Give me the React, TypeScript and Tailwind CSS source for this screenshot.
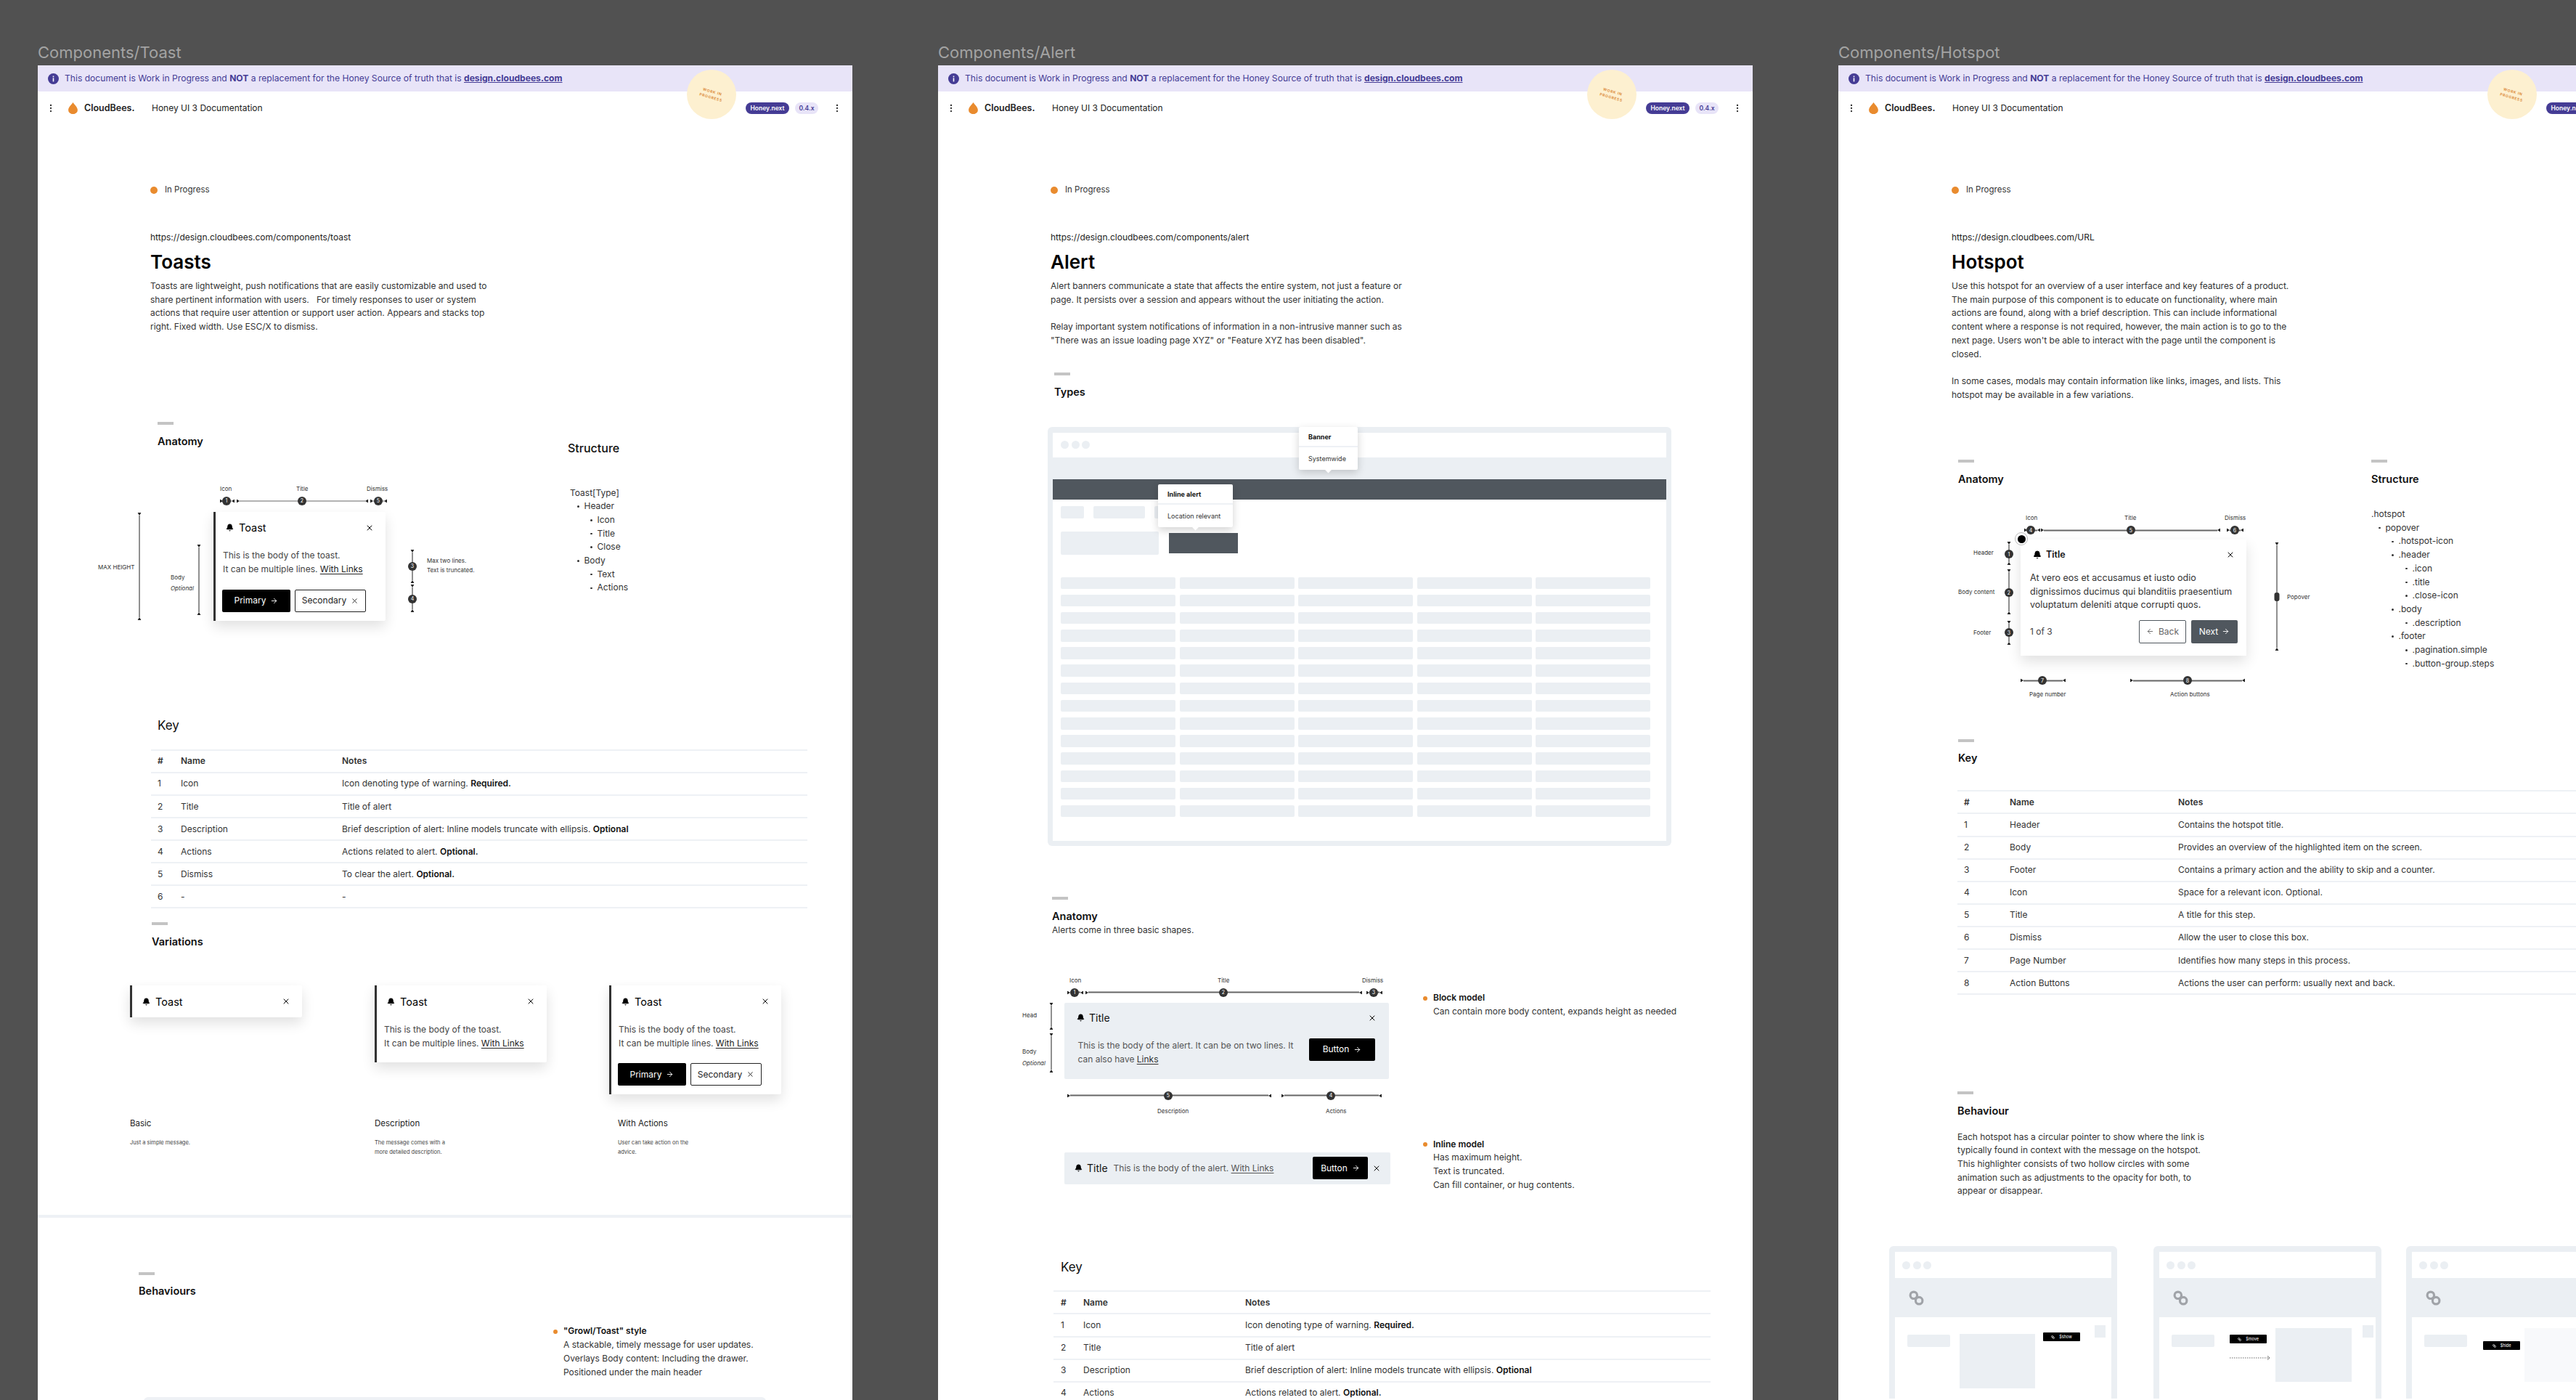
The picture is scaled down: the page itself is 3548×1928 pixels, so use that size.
import React from 'react';
import { Bell, X, ArrowRight, ArrowLeft, EllipsisVertical } from 'lucide-react';

const Tip = ({ dir }: { dir: 'r' | 'l' | 'd' | 'u' }) => {
    const paths = { r: 'M0 0L4 2.5L0 5Z', l: 'M4 0L0 2.5L4 5Z', d: 'M0 0L5 0L2.5 4Z', u: 'M0 4L5 4L2.5 0Z' };
    const wide = dir === 'd' || dir === 'u';
    return (
        <svg width={wide ? 5 : 4} height={wide ? 4 : 5} viewBox={wide ? '0 0 5 4' : '0 0 4 5'} className="shrink-0">
            <path d={paths[dir]} fill="#222" />
        </svg>
    );
};

const HRule = ({ className }: { className: string }) => (
    <div className={`absolute flex items-center -translate-y-1/2 ${className}`}>
        <Tip dir="r" />
        <div className="flex-1 h-[1.5px] bg-[#666]" />
        <Tip dir="l" />
    </div>
);

const VRule = ({ className }: { className: string }) => (
    <div className={`absolute flex flex-col items-center -translate-x-1/2 ${className}`}>
        <Tip dir="d" />
        <div className="flex-1 w-px bg-[#222]" />
        <Tip dir="u" />
    </div>
);

const Node = ({ n, className }: { n?: number; className: string }) => (
    <div className={`absolute flex items-center justify-center w-[12px] h-[12px] rounded-full bg-[#333] text-white text-[7px] leading-none -translate-x-1/2 -translate-y-1/2 ${className}`}>
        {n}
    </div>
);

const Note = ({ children, className }: { children: React.ReactNode; className: string }) => (
    <span className={`absolute text-[8px] leading-[10px] text-[#333] whitespace-nowrap -translate-y-1/2 ${className}`}>
        {children}
    </span>
);

const Dash = () => <div className="w-[22px] h-[4px] bg-[#c4c4c4]" />;

const BellIcon = ({ size = 11 }: { size?: number }) => <Bell size={size} className="fill-current text-black shrink-0" strokeWidth={2} />;

const HeadTitle = ({ children, className }: { children: React.ReactNode; className: string }) => (
    <h2 className={`text-[14.5px] leading-[20px] font-semibold text-[#111] ${className}`}>{children}</h2>
);

const Banner = () => (
    <div className="flex items-center h-[36px] bg-[#e8e4f8] text-[#453c95] text-[12.1px] pl-[14px]">
        <svg width="15" height="15" viewBox="0 0 15 15" className="shrink-0">
            <circle cx="7.5" cy="7.5" r="7.5" fill="#453c95" />
            <rect x="6.7" y="6.4" width="1.6" height="5" fill="#fff" />
            <rect x="6.7" y="3.6" width="1.6" height="1.7" fill="#fff" />
        </svg>
        <span className="ml-[8px] whitespace-nowrap">
            This document is Work in Progress and <b className="font-bold">NOT</b> a replacement for the Honey Source of truth that is{' '}
            <b className="font-bold underline">design.cloudbees.com</b>
        </span>
    </div>
);

const Nav = () => (
    <div className="flex items-center h-[46px] pl-[11px] pr-[14px] text-[12px] text-[#222]">
        <EllipsisVertical size={14} className="text-[#333] shrink-0" />
        <svg width="15" height="16" viewBox="0 0 14 15" className="ml-[16px] shrink-0">
            <path d="M7 0C9 3 13 6 13 10A6 5.2 0 0 1 1 10C1 6 5 3 7 0Z" fill="#e98b2e" />
        </svg>
        <span className="ml-[8px] w-[93px] text-[12.5px] font-semibold text-[#222]">CloudBees.</span>
        <span>Honey UI 3 Documentation</span>
        <div className="ml-auto flex items-center gap-[8px] text-[8.5px] font-semibold">
            <span className="px-[5px] h-[16px] w-[60px] flex items-center justify-center rounded-full bg-[#453c95] text-white whitespace-nowrap">Honey.next</span>
            <span className="h-[16px] w-[32px] flex items-center justify-center rounded-full bg-[#e8e4f8] text-[#453c95]">0.4.x</span>
        </div>
        <EllipsisVertical size={14} className="ml-[19px] text-[#333] shrink-0" />
    </div>
);

const WorkBadge = () => (
    <div className="absolute left-[894px] top-[6px] z-10 flex items-center justify-center w-[68px] h-[68px] rounded-full bg-[#fdf0d0]">
        <span className="rotate-[16deg] text-center text-[5px] leading-[8px] tracking-[0.14em] font-semibold text-[#d9822b]">
            WORK IN
            <br />
            PROGRESS
        </span>
    </div>
);

const Intro = ({ url, title, children }: { url: string; title: string; children: React.ReactNode }) => (
    <div className="pl-[155px]">
        <div className="mt-[82px] flex items-center h-[16px] text-[11.5px] text-[#333]">
            <span className="w-[10px] h-[10px] rounded-full bg-[#e98b2e]" />
            <span className="ml-[10px]">In Progress</span>
        </div>
        <div className="mt-[49px] h-[16px] text-[12px] leading-[16px] text-[#222]">{url}</div>
        <h1 className="mt-[9px] h-[34px] text-[26px] leading-[34px] font-semibold text-black">{title}</h1>
        <div className="mt-[7px] w-[484px] text-[12px] leading-[18.7px] text-[#333]">{children}</div>
    </div>
);

const Row = ({ cells, head, name, hash }: { cells: React.ReactNode[]; head?: boolean; name: string; hash: string }) => (
    <div className={`flex items-center h-[31.1px] border-b-2 border-[#eef1f5] text-[12px] text-[#333] ${head ? 'font-semibold text-[#111]' : ''}`}>
        <span className={hash}>{cells[0]}</span>
        <span className={name}>{cells[1]}</span>
        <span>{cells[2]}</span>
    </div>
);

const Table = ({ rows, name, hash }: { rows: React.ReactNode[][]; name: string; hash: string }) => (
    <div className="border-t-2 border-[#eef1f5]">
        <Row cells={['#', 'Name', 'Notes']} head name={name} hash={hash} />
        {rows.map((cells, i) => (
            <Row key={i} cells={cells} name={name} hash={hash} />
        ))}
    </div>
);

const ToastCard = ({ body, actions, className }: { body?: boolean; actions?: boolean; className?: string }) => (
    <div className={`w-[237px] bg-white border-l-[3px] border-[#333] rounded-r-[2px] shadow-[0_8px_18px_rgba(0,0,0,0.12)] ${className ?? ''}`}>
        <div className="flex items-center h-[44px] pl-[14px]">
            <BellIcon />
            <span className="ml-[7px] text-[14.5px] text-black">Toast</span>
            <X size={12} className="ml-auto mr-[16px] text-black" />
        </div>
        {body && (
            <div className={`pl-[10px] pt-[6.5px] text-[12px] leading-[19px] text-[#444] ${actions ? '' : 'pb-[17.5px]'}`}>
                <p>This is the body of the toast.</p>
                <p>
                    It can be multiple lines. <span className="text-[#222] underline underline-offset-2">With Links</span>
                </p>
            </div>
        )}
        {actions && (
            <div className="flex gap-[6px] pl-[9px] mt-[18.5px] pb-[12px]">
                <button className="flex items-center justify-center gap-[6px] w-[94px] h-[31px] rounded-[2px] bg-black text-white text-[12px]">
                    Primary <ArrowRight size={11} />
                </button>
                <button className="flex items-center justify-center gap-[6px] w-[98px] h-[31px] rounded-[2px] border border-[#222] bg-white text-[#222] text-[12px]">
                    Secondary <X size={11} />
                </button>
            </div>
        )}
    </div>
);

const Tree = ({ items, className }: { items: [string, number][]; className?: string }) => {
    const indent = ['', 'pl-[10px]', 'pl-[28px]', 'pl-[47px]'];
    return (
        <div className={`text-[12px] leading-[18.7px] text-[#333] ${className ?? ''}`}>
            {items.map(([text, level], i) => (
                <div key={i} className={`flex items-center ${indent[level]}`}>
                    {level > 0 && <span className="w-[2.5px] h-[2.5px] rounded-full bg-[#333] mr-[7px]" />}
                    {text}
                </div>
            ))}
        </div>
    );
};

const Bullet = ({ title, lines, className }: { title: string; lines: string[]; className?: string }) => (
    <div className={`flex text-[12px] leading-[18.7px] text-[#333] ${className ?? ''}`}>
        <span className="w-[6px] h-[6px] mt-[6.5px] mr-[8px] rounded-full bg-[#e98b2e] shrink-0" />
        <div>
            <div className="font-semibold text-[#111]">{title}</div>
            {lines.map((l) => (
                <div key={l}>{l}</div>
            ))}
        </div>
    </div>
);

const Frame = ({ label, children }: { label: string; children: React.ReactNode }) => (
    <div className="shrink-0 w-[1122px]">
        <div className="flex items-end h-[90px] pb-[4px] text-[22px] leading-[28px] text-[#a3a3a3]">{label}</div>
        <div className="relative h-[1838px] bg-white overflow-hidden">
            <Banner />
            <Nav />
            <WorkBadge />
            {children}
        </div>
    </div>
);

const ToastFrame = () => (
    <Frame label="Components/Toast">
        <Intro url="https://design.cloudbees.com/components/toast" title="Toasts">
            Toasts are lightweight, push notifications that are easily customizable and used to share pertinent information with users.&nbsp;&nbsp; For timely responses to user or system actions that require user attention or support user action. Appears and stacks top right. Fixed width. Use ESC/X to dismiss.
        </Intro>

        <div className="flex mt-[121px]">
            <div className="w-[730px]">
                <div className="pl-[165px]">
                    <Dash />
                    <HeadTitle className="mt-[13px]">Anatomy</HeadTitle>
                </div>
                <div className="relative mt-[42px] h-[300px]">
                    <Note className="left-[251px] top-[13px]">Icon</Note>
                    <Note className="left-[356px] top-[13px]">Title</Note>
                    <Note className="left-[453px] top-[13px]">Dismiss</Note>
                    <HRule className="left-[251px] top-[30px] w-[20px]" />
                    <HRule className="left-[274px] top-[30px] w-[181px]" />
                    <HRule className="left-[458px] top-[30px] w-[23px]" />
                    <Node n={1} className="left-[260px] top-[30px]" />
                    <Node n={2} className="left-[364px] top-[30px]" />
                    <Node n={5} className="left-[469px] top-[30px]" />
                    <VRule className="left-[140px] top-[46px] h-[148px]" />
                    <Note className="left-[83px] top-[121px]">MAX HEIGHT</Note>
                    <VRule className="left-[222px] top-[90px] h-[97px]" />
                    <Note className="left-[183px] top-[135px]">Body</Note>
                    <Note className="left-[183px] top-[150px] italic">Optional</Note>
                    <ToastCard body actions className="absolute left-[242px] top-[45px]" />
                    <VRule className="left-[516px] top-[97px] h-[46px]" />
                    <Node n={3} className="left-[516px] top-[120px]" />
                    <VRule className="left-[516px] top-[145px] h-[38px]" />
                    <Node n={4} className="left-[516px] top-[165px]" />
                    <Note className="left-[536px] top-[112px] text-[7.5px]">Max two lines.</Note>
                    <Note className="left-[536px] top-[125px] text-[7.5px]">Text is truncated.</Note>
                </div>
            </div>
            <div>
                <h2 className="mt-[26px] text-[16px] leading-[20px] font-medium text-[#111]">Structure</h2>
                <Tree
                    className="mt-[42.7px] pl-[3px]"
                    items={[['Toast[Type]', 0], ['Header', 1], ['Icon', 2], ['Title', 2], ['Close', 2], ['Body', 1], ['Text', 2], ['Actions', 2]]}
                />
            </div>
        </div>

        <div className="mt-[27px] pl-[165px] text-[17px] leading-[24px] text-[#111]">Key</div>
        <div className="mt-[21px] ml-[156px] w-[904px]">
            <Table
                hash="w-[41px] pl-[9px]"
                name="w-[222px]"
                rows={[
                    ['1', 'Icon', <>Icon denoting type of warning. <b className="font-semibold text-[#111]">Required.</b></>],
                    ['2', 'Title', 'Title of alert'],
                    ['3', 'Description', <>Brief description of alert: Inline models truncate with ellipsis. <b className="font-semibold text-[#111]">Optional</b></>],
                    ['4', 'Actions', <>Actions related to alert. <b className="font-semibold text-[#111]">Optional.</b></>],
                    ['5', 'Dismiss', <>To clear the alert. <b className="font-semibold text-[#111]">Optional.</b></>],
                    ['6', '-', '-'],
                ]}
            />
        </div>

        <div className="mt-[19px] pl-[157px]">
            <Dash />
            <HeadTitle className="mt-[13px]">Variations</HeadTitle>
        </div>

        <div className="flex mt-[50px] h-[316px] pl-[127px]">
            <div className="w-[337px]">
                <div className="h-[182px]"><ToastCard /></div>
                <div className="text-[11.5px] leading-[16px] text-[#222]">Basic</div>
                <div className="mt-[12px] text-[7.5px] leading-[13px] text-[#444]">Just a simple message.</div>
            </div>
            <div className="w-[323px]">
                <div className="h-[182px]"><ToastCard body /></div>
                <div className="text-[11.5px] leading-[16px] text-[#222]">Description</div>
                <div className="mt-[12px] text-[7.5px] leading-[13px] text-[#444]">The message comes with a<br />more detailed description.</div>
            </div>
            <div>
                <div className="h-[182px]"><ToastCard body actions /></div>
                <div className="pl-[12px]">
                    <div className="text-[11.5px] leading-[16px] text-[#222]">With Actions</div>
                    <div className="mt-[12px] text-[7.5px] leading-[13px] text-[#444]">User can take action on the<br />advice.</div>
                </div>
            </div>
        </div>

        <div className="h-[4px] bg-[#eef1f5]" />

        <div className="mt-[75px] pl-[139px]">
            <Dash />
            <HeadTitle className="mt-[12px]">Behaviours</HeadTitle>
        </div>
        <Bullet
            className="mt-[36px] ml-[710px]"
            title={'"Growl/Toast" style'}
            lines={['A stackable, timely message for user updates.', 'Overlays Body content: Including the drawer.', 'Positioned under the main header']}
        />
        <div className="mt-[25px] ml-[146px] w-[857px] h-[100px] rounded-t-[6px] bg-[#eef1f5]" />
    </Frame>
);

const Tooltip = ({ title, text, className, arrow }: { title: string; text: string; className: string; arrow: string }) => (
    <div className={`absolute bg-white rounded-[2px] shadow-[0_4px_12px_rgba(0,0,0,0.18)] text-[9px] text-[#333] ${className}`}>
        <div className="flex items-center h-[28px] pt-[2px] pl-[13px] font-bold text-[#111] border-b-2 border-[#eef1f5]">{title}</div>
        <div className="flex items-center h-[31px] pt-[1px] pl-[13px]">{text}</div>
        <span className={`absolute bottom-[-3px] w-[7px] h-[7px] bg-white rotate-45 ${arrow}`} />
    </div>
);

const Dots = () => (
    <div className="flex gap-[3.5px]">
        <span className="w-[11px] h-[11px] rounded-full bg-[#ebeff3]" />
        <span className="w-[11px] h-[11px] rounded-full bg-[#ebeff3]" />
        <span className="w-[11px] h-[11px] rounded-full bg-[#ebeff3]" />
    </div>
);

const AlertFrame = () => (
    <Frame label="Components/Alert">
        <Intro url="https://design.cloudbees.com/components/alert" title="Alert">
            Alert banners communicate a state that affects the entire system, not just a feature or page. It persists over a session and appears without the user initiating the action.
            <br />
            <br />
            Relay important system notifications of information in a non-intrusive manner such as "There was an issue loading page XYZ" or "Feature XYZ has been disabled".
        </Intro>

        <div className="mt-[34px] pl-[160px]">
            <Dash />
            <HeadTitle className="mt-[13px]">Types</HeadTitle>
        </div>

        <div className="relative mt-[38px] ml-[151px] w-[859px] h-[577px] rounded-[6px] bg-[#ebeff3] p-[7px] pt-[8px] flex flex-col">
            <div className="flex items-center h-[34px] pl-[11px] bg-white"><Dots /></div>
            <div className="h-[30px]" />
            <div className="h-[28px] bg-[#50575e]" />
            <div className="flex-1 bg-white pl-[11px]">
                <div className="flex gap-[13px] pt-[9.5px]">
                    <div className="w-[32px] h-[16.5px] rounded-[2px] bg-[#ebeff3]" />
                    <div className="w-[71px] h-[16.5px] rounded-[2px] bg-[#ebeff3]" />
                    <div className="w-[30px] h-[16.5px] rounded-[2px] bg-[#ebeff3]" />
                </div>
                <div className="flex items-center gap-[14px] mt-[18.5px]">
                    <div className="w-[135px] h-[32px] rounded-[2px] bg-[#ebeff3]" />
                    <div className="w-[95px] h-[28px] bg-[#50575e]" />
                </div>
                <div className="grid grid-cols-5 gap-x-[5.5px] gap-y-[7.7px] w-[812px] mt-[30.5px]">
                    {Array.from({ length: 70 }).map((_, i) => (
                        <div key={i} className="h-[16.5px] rounded-[2px] bg-[#ebeff3]" />
                    ))}
                </div>
            </div>
            <Tooltip title="Banner" text="Systemwide" className="left-[346px] top-0 w-[81px]" arrow="left-[37px]" />
            <Tooltip title="Inline alert" text="Location relevant" className="left-[152px] top-[79px] w-[103px]" arrow="left-[48px]" />
        </div>

        <div className="mt-[70px] pl-[157px]">
            <Dash />
            <HeadTitle className="mt-[13px]">Anatomy</HeadTitle>
            <div className="mt-[2px] text-[12px] leading-[14px] text-[#333]">Alerts come in three basic shapes.</div>
        </div>

        <div className="flex mt-[51px]">
            <div className="relative w-[668px] h-[300px] shrink-0">
                <Note className="left-[181px] top-[11px]">Icon</Note>
                <Note className="left-[385px] top-[11px]">Title</Note>
                <Note className="left-[584px] top-[11px]">Dismiss</Note>
                <HRule className="left-[178px] top-[28px] w-[22px]" />
                <HRule className="left-[203px] top-[28px] w-[381px]" />
                <HRule className="left-[590px] top-[28px] w-[22px]" />
                <Node n={1} className="left-[188px] top-[28px]" />
                <Node n={2} className="left-[393px] top-[28px]" />
                <Node n={3} className="left-[600px] top-[28px]" />
                <Note className="left-[116px] top-[59px]">Head</Note>
                <Note className="left-[116px] top-[109px]">Body</Note>
                <Note className="left-[116px] top-[125px] italic">Optional</Note>
                <VRule className="left-[156px] top-[42px] h-[37px]" />
                <VRule className="left-[156px] top-[84px] h-[54px]" />

                <div className="absolute left-[174px] top-[42px] w-[447px] h-[105px] rounded-[2px] bg-[#ebeff3]">
                    <div className="flex items-center h-[42px] pl-[17px]">
                        <BellIcon />
                        <span className="ml-[6px] text-[14px] text-[#111]">Title</span>
                        <X size={12} className="ml-auto mr-[17px] text-black" />
                    </div>
                    <div className="flex items-start pl-[18.5px]">
                        <p className="w-[300px] pt-[7.5px] text-[12px] leading-[19px] text-[#555]">
                            This is the body of the alert. It can be on two lines. It can also have <span className="text-[#333] underline underline-offset-2">Links</span>
                        </p>
                        <button className="flex items-center justify-center gap-[6px] ml-[18.5px] mt-[7px] w-[91px] h-[31.5px] rounded-[2px] bg-black text-white text-[12px]">
                            Button <ArrowRight size={11} />
                        </button>
                    </div>
                </div>

                <HRule className="left-[178px] top-[170px] w-[281px]" />
                <HRule className="left-[473px] top-[170px] w-[138px]" />
                <Node n={5} className="left-[317px] top-[170px]" />
                <Node n={4} className="left-[541px] top-[170px]" />
                <Note className="left-[302px] top-[191px]">Description</Note>
                <Note className="left-[534px] top-[191px]">Actions</Note>

                <div className="absolute left-[174px] top-[248px] flex items-center w-[449px] h-[44px] rounded-[2px] bg-[#ebeff3]">
                    <span className="ml-[14px] flex"><BellIcon /></span>
                    <span className="ml-[6px] text-[14px] text-[#111]">Title</span>
                    <span className="ml-[8px] text-[12px] text-[#555] whitespace-nowrap">
                        This is the body of the alert. <span className="underline underline-offset-2">With Links</span>
                    </span>
                    <button className="flex items-center justify-center gap-[6px] ml-auto w-[76px] h-[31px] rounded-[2px] bg-black text-white text-[12px]">
                        Button <ArrowRight size={11} />
                    </button>
                    <X size={12} className="ml-[6px] mr-[13px] shrink-0 text-black" />
                </div>
            </div>
            <div className="pt-[26.6px]">
                <Bullet title="Block model" lines={['Can contain more body content, expands height as needed']} />
                <Bullet className="mt-[164px]" title="Inline model" lines={['Has maximum height.', 'Text is truncated.', 'Can fill container, or hug contents.']} />
            </div>
        </div>

        <div className="mt-[92px] pl-[169px] text-[17px] leading-[24px] text-[#111]">Key</div>
        <div className="mt-[20px] ml-[159px] w-[905px]">
            <Table
                hash="w-[41px] pl-[10px]"
                name="w-[223px]"
                rows={[
                    ['1', 'Icon', <>Icon denoting type of warning. <b className="font-semibold text-[#111]">Required.</b></>],
                    ['2', 'Title', 'Title of alert'],
                    ['3', 'Description', <>Brief description of alert: Inline models truncate with ellipsis. <b className="font-semibold text-[#111]">Optional</b></>],
                    ['4', 'Actions', <>Actions related to alert. <b className="font-semibold text-[#111]">Optional.</b></>],
                ]}
            />
        </div>
    </Frame>
);

const LinkGlyph = ({ size, color }: { size: number; color: string }) => (
    <svg width={size} height={size} viewBox="0 0 20 20" fill="none" stroke={color} strokeWidth="3">
        <circle cx="6.5" cy="6.5" r="4.5" />
        <circle cx="13.5" cy="13.5" r="4.5" />
    </svg>
);

const Chip = ({ text, className }: { text: string; className: string }) => (
    <div className={`flex items-center justify-center gap-[6px] w-[51px] h-[12px] rounded-[1px] bg-black text-white text-[5.5px] shrink-0 ${className}`}>
        <LinkGlyph size={5} color="#fff" />
        {text}
    </div>
);

const Thumb = ({ children }: { children: React.ReactNode }) => (
    <div className="shrink-0 w-[314px] h-[210px] rounded-t-[6px] bg-[#ebeff3] px-[8px] pt-[8px] flex flex-col">
        <div className="flex items-center h-[36px] pl-[10px] bg-white"><Dots /></div>
        <div className="flex items-center h-[54px] pl-[19px]"><LinkGlyph size={21} color="#a0a3a8" /></div>
        <div className="flex-1 flex items-start bg-white">{children}</div>
    </div>
);

const HotspotFrame = () => (
    <Frame label="Components/Hotspot">
        <div className="pl-px">
            <Intro url="https://design.cloudbees.com/URL" title="Hotspot">
                Use this hotspot for an overview of a user interface and key features of a product. The main purpose of this component is to educate on functionality, where main actions are found, along with a brief description. This can include informational content where a response is not required, however, the main action is to go to the next page. Users won't be able to interact with the page until the component is closed.
                <br />
                <br />
                In some cases, modals may contain information like links, images, and lists. This hotspot may be available in a few variations.
            </Intro>
        </div>

        <div className="flex mt-[80px]">
            <div className="w-[734px] shrink-0">
                <div className="pl-[165px]">
                    <Dash />
                    <HeadTitle className="mt-[13px]">Anatomy</HeadTitle>
                </div>
                <div className="relative mt-[30px] h-[270px]">
                    <Note className="left-[258px] top-[13px]">Icon</Note>
                    <Note className="left-[394px] top-[13px]">Title</Note>
                    <Note className="left-[532px] top-[13px]">Dismiss</Note>
                    <HRule className="left-[256px] top-[30px] w-[22px]" />
                    <HRule className="left-[279px] top-[30px] w-[247px]" />
                    <HRule className="left-[535px] top-[30px] w-[23px]" />
                    <Node n={4} className="left-[265px] top-[30px]" />
                    <Node n={5} className="left-[403px] top-[30px]" />
                    <Node n={6} className="left-[546px] top-[30px]" />

                    <Note className="left-[186px] top-[61px]">Header</Note>
                    <Note className="left-[165px] top-[115px]">Body content</Note>
                    <Note className="left-[186px] top-[171px]">Footer</Note>
                    <VRule className="left-[235px] top-[46px] h-[32px]" />
                    <VRule className="left-[235px] top-[84px] h-[62px]" />
                    <VRule className="left-[235px] top-[155px] h-[33px]" />
                    <Node n={1} className="left-[235px] top-[63px]" />
                    <Node n={2} className="left-[235px] top-[116px]" />
                    <Node n={3} className="left-[235px] top-[171px]" />

                    <div className="absolute left-[251px] top-[43px] w-[311px] h-[160px] bg-white shadow-[0_8px_18px_rgba(0,0,0,0.12)]">
                        <div className="flex items-center h-[42px] pl-[17px]">
                            <BellIcon size={12} />
                            <span className="ml-[6px] text-[12.5px] font-semibold text-[#111]">Title</span>
                            <X size={12} className="ml-auto mr-[16px] text-black" />
                        </div>
                        <p className="pl-[13px] pt-[1.6px] w-[300px] text-[12.5px] leading-[18.7px] text-[#333]">
                            At vero eos et accusamus et iusto odio dignissimos ducimus qui blanditiis praesentium voluptatum deleniti atque corrupti quos.
                        </p>
                        <div className="flex items-center mt-[11px] pl-[13px]">
                            <span className="text-[12px] text-[#444]">1 of 3</span>
                            <button className="flex items-center justify-center gap-[6px] ml-auto w-[65px] h-[31.5px] rounded-[2px] border border-[#50575e] text-[#666] text-[12px]">
                                <ArrowLeft size={11} /> Back
                            </button>
                            <button className="flex items-center justify-center gap-[5px] ml-[7px] mr-[12px] w-[64px] h-[31.5px] rounded-[2px] bg-[#50575e] text-white text-[12px]">
                                Next <ArrowRight size={11} />
                            </button>
                        </div>
                    </div>

                    <div className="absolute left-[243px] top-[33px] flex items-center justify-center w-[18px] h-[18px] rounded-full bg-white border border-[#bbb]">
                        <span className="w-[11px] h-[11px] rounded-full bg-black" />
                    </div>

                    <VRule className="left-[604px] top-[47px] h-[149px]" />
                    <div className="absolute left-[604px] top-[122px] w-[7px] h-[12px] rounded-[3px] bg-[#333] -translate-x-1/2 -translate-y-1/2" />
                    <Note className="left-[618px] top-[122px]">Popover</Note>

                    <HRule className="left-[251px] top-[237px] w-[62px]" />
                    <HRule className="left-[402px] top-[237px] w-[158px]" />
                    <Node n={7} className="left-[281px] top-[237px]" />
                    <Node n={8} className="left-[481px] top-[237px]" />
                    <Note className="left-[263px] top-[256px]">Page number</Note>
                    <Note className="left-[457px] top-[256px]">Action buttons</Note>
                </div>
            </div>
            <div>
                <Dash />
                <HeadTitle className="mt-[13px]">Structure</HeadTitle>
                <Tree
                    className="mt-[28.7px]"
                    items={[
                        ['.hotspot', 0], ['popover', 1], ['.hotspot-icon', 2], ['.header', 2], ['.icon', 3], ['.title', 3], ['.close-icon', 3],
                        ['.body', 2], ['.description', 3], ['.footer', 2], ['.pagination.simple', 3], ['.button-group.steps', 3],
                    ]}
                />
            </div>
        </div>

        <div className="mt-[47.5px] pl-[165px]">
            <Dash />
            <HeadTitle className="mt-[12.5px]">Key</HeadTitle>
        </div>
        <div className="mt-[34px] ml-[164px]">
            <Table
                hash="w-[72px] pl-[9px]"
                name="w-[232px]"
                rows={[
                    ['1', 'Header', 'Contains the hotspot title.'],
                    ['2', 'Body', 'Provides an overview of the highlighted item on the screen.'],
                    ['3', 'Footer', 'Contains a primary action and the ability to skip and a counter.'],
                    ['4', 'Icon', 'Space for a relevant icon. Optional.'],
                    ['5', 'Title', 'A title for this step.'],
                    ['6', 'Dismiss', 'Allow the user to close this box.'],
                    ['7', 'Page Number', 'Identifies how many steps in this process.'],
                    ['8', 'Action Buttons', 'Actions the user can perform: usually next and back.'],
                ]}
            />
        </div>

        <div className="mt-[133px] pl-[164px]">
            <Dash />
            <HeadTitle className="mt-[12.5px]">Behaviour</HeadTitle>
            <p className="mt-[17px] w-[350px] text-[12px] leading-[18.7px] text-[#333]">
                Each hotspot has a circular pointer to show where the link is typically found in context with the message on the hotspot. This highlighter consists of two hollow circles with some animation such as adjustments to the opacity for both, to appear or disappear.
            </p>
        </div>

        <div className="flex mt-[66px] pl-[70px]">
            <Thumb>
                <div className="ml-[17px] mt-[24px] w-[59px] h-[17px] rounded-[2px] bg-[#ebeff3]" />
                <div className="ml-[13px] mt-[23px] w-[104px] h-[75px] bg-[#ebeff3]" />
                <Chip text="$show" className="ml-[11px] mt-[21px]" />
                <div className="ml-[20px] mt-[11px] w-[15px] h-[17px] bg-[#ebeff3]" />
            </Thumb>
            <div className="w-[50px] shrink-0" />
            <Thumb>
                <div className="ml-[17px] mt-[24px] w-[59px] h-[17px] rounded-[2px] bg-[#ebeff3]" />
                <div className="ml-[21px] mt-[24px]">
                    <Chip text="$move" className="" />
                    <svg width="56" height="6" viewBox="0 0 56 6" fill="none" stroke="#444" strokeWidth="0.8" className="mt-[17px]">
                        <path d="M0 3H54" strokeDasharray="1.5 1.5" />
                        <path d="M52 0.5L55 3L52 5.5" />
                    </svg>
                </div>
                <div className="ml-[7px] mt-[15px] w-[105px] h-[74px] bg-[#ebeff3]" />
                <div className="ml-[15px] mt-[11px] w-[15px] h-[17px] bg-[#ebeff3]" />
            </Thumb>
            <div className="w-[34px] shrink-0" />
            <Thumb>
                <div className="ml-[17px] mt-[24px] w-[59px] h-[17px] rounded-[2px] bg-[#ebeff3]" />
                <Chip text="$hide" className="ml-[22px] mt-[33px]" />
                <div className="ml-[6px] mt-[15px] w-[105px] h-[74px] bg-[#f8f9fb]" />
            </Thumb>
        </div>
    </Frame>
);

export default function App() {
    return (
        <div className="flex gap-[118px] w-[3548px] h-[1928px] pl-[52px] bg-[#515151] overflow-hidden font-[Inter,sans-serif]">
            <ToastFrame />
            <AlertFrame />
            <HotspotFrame />
        </div>
    );
}
